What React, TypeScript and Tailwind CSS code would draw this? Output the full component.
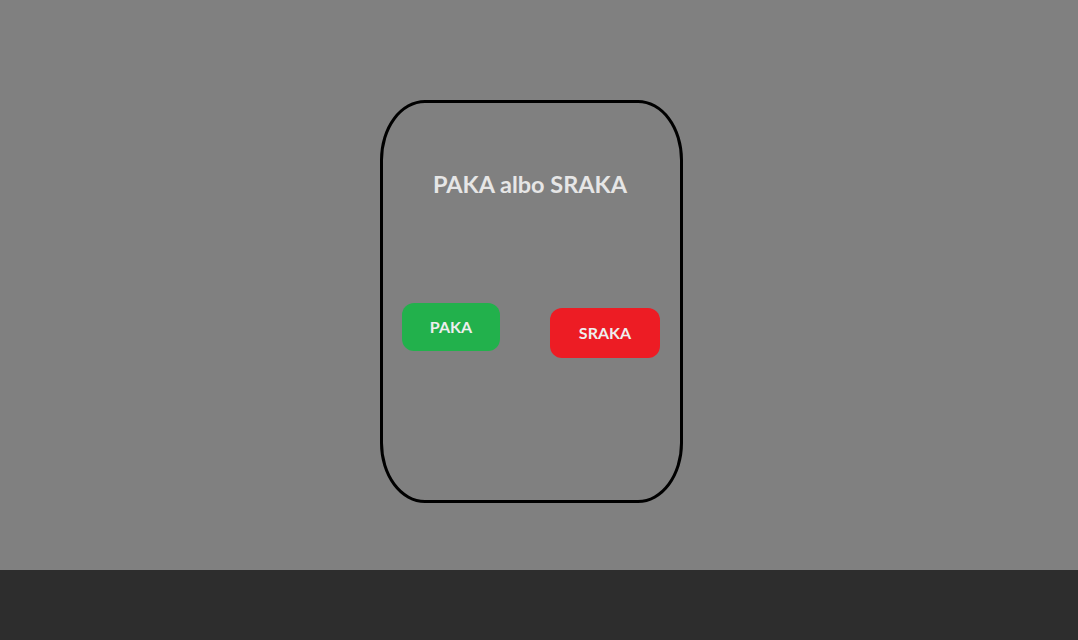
export default function App() {
  return (
    <div className="w-[1078px] h-[640px] flex flex-col bg-[#808080]" style={{ fontFamily: "Lato, 'Open Sans', sans-serif" }}>
      <div className="h-[570px] pt-[100px] pl-[380px]">
        <div className="w-[303px] h-[403px] border-[3px] border-black rounded-[45px/60px] flex flex-col">
          <div className="mt-[67px] pr-[3px] text-center text-[23.5px] font-bold text-[#e6e6e6] leading-[28px]">PAKA albo SRAKA</div>
          <div className="mt-[105px] pl-[19px] pr-[20px] flex justify-between items-start">
            <button className="w-[98px] h-[48px] rounded-[12px] bg-[#22b14c] text-[#eeeeee] text-[16px] font-bold">PAKA</button>
            <button className="mt-[5px] w-[110px] h-[50px] rounded-[12px] bg-[#ed1c24] text-[#eeeeee] text-[16px] font-bold">SRAKA</button>
          </div>
        </div>
      </div>
      <div className="h-[70px] bg-[#2d2d2d]" />
    </div>
  );
}
